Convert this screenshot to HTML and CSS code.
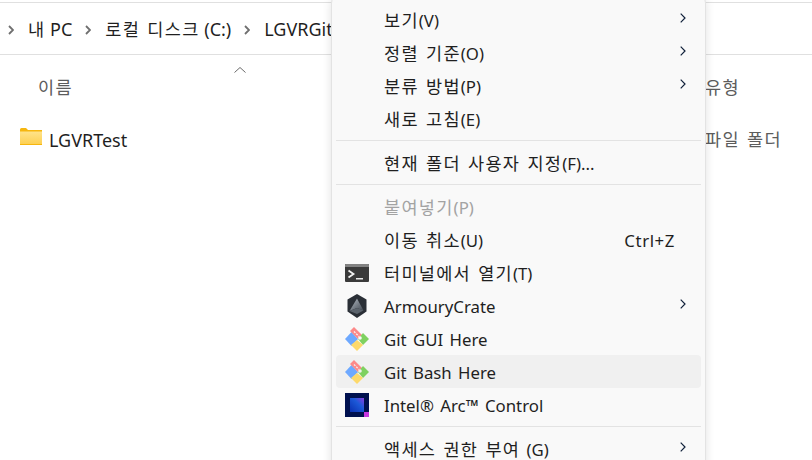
FILE: index.html
```html
<!DOCTYPE html>
<html lang="ko">
<head>
<meta charset="utf-8">
<title>Explorer context menu</title>
<link rel="stylesheet" href="styles.css">
</head>
<body>
<main class="explorer">
  <nav class="crumbs">
    <svg class="crumb-chev" viewBox="0 0 6 10"><path d="M1 1l4 4-4 4"/></svg>
    <span class="crumb"><span class="ko">내</span> PC</span>
    <svg class="crumb-chev" viewBox="0 0 6 10"><path d="M1 1l4 4-4 4"/></svg>
    <span class="crumb"><span class="ko">로컬 디스크</span> (C:)</span>
    <svg class="crumb-chev" viewBox="0 0 6 10"><path d="M1 1l4 4-4 4"/></svg>
    <span class="crumb">LGVRGit</span>
  </nav>
  <div class="list">
    <div class="list-head">
      <span class="col-name"><span class="ko">이름</span><svg class="caret" viewBox="0 0 12 6"><path d="M.5 5.500L6 .5l5.500 5"/></svg></span>
      <span class="col-type"><span class="ko">유형</span></span>
    </div>
    <div class="list-row">
      <span class="col-file">
        <svg class="folder" viewBox="0 0 22 17">
          <defs><linearGradient id="fg" x1="0" y1="0" x2="0" y2="1"><stop offset="0" stop-color="#ffe38a"/><stop offset="1" stop-color="#fdd053"/></linearGradient></defs>
          <path d="M0 1.500Q0 0 1.500 0H6l2 2h14v15H0z" fill="#f6b60f"/>
          <path d="M0 3.500h22V16H0z" fill="url(#fg)"/>
        </svg>LGVRTest</span>
      <span class="col-type"><span class="ko">파일 폴더</span></span>
    </div>
  </div>
</main>

<aside class="menu">
  <div class="item"><span class="slot"></span><span class="label"><span class="ko">보기</span>(V)</span><svg class="chev" viewBox="0 0 6 10"><path d="M.7.7L5 5 .7 9.300"/></svg></div>
  <div class="item"><span class="slot"></span><span class="label"><span class="ko">정렬 기준</span>(O)</span><svg class="chev" viewBox="0 0 6 10"><path d="M.7.7L5 5 .7 9.300"/></svg></div>
  <div class="item"><span class="slot"></span><span class="label"><span class="ko">분류 방법</span>(P)</span><svg class="chev" viewBox="0 0 6 10"><path d="M.7.7L5 5 .7 9.300"/></svg></div>
  <div class="item"><span class="slot"></span><span class="label"><span class="ko">새로 고침</span>(E)</span></div>
  <hr class="sep">
  <div class="item"><span class="slot"></span><span class="label"><span class="ko">현재 폴더 사용자 지정</span>(F)...</span></div>
  <hr class="sep">
  <div class="item item-off"><span class="slot"></span><span class="label"><span class="ko">붙여넣기</span>(P)</span></div>
  <div class="item"><span class="slot"></span><span class="label"><span class="ko">이동 취소</span>(U)</span><span class="key">Ctrl+Z</span></div>
  <div class="item"><span class="slot">
    <svg class="ico" viewBox="0 0 24 24">
      <rect y="3" width="24" height="18" rx="1" fill="#3a3a3a"/>
      <path d="M0 4a1 1 0 0 1 1-1h22a1 1 0 0 1 1 1v2H0z" fill="#828282"/>
      <path d="M3.500 9.500l5 3.500-5 3.500" fill="none" stroke="#f2f2f2" stroke-width="1.800"/>
      <path d="M11 17h7v1.500h-7z" fill="#e8e8e8"/>
    </svg></span><span class="label"><span class="ko">터미널에서 열기</span>(T)</span></div>
  <div class="item"><span class="slot">
    <svg class="ico" viewBox="0 0 24 24">
      <defs><linearGradient id="ag" x1="0" y1="0" x2="1" y2="1"><stop offset="0" stop-color="#b4bcc4"/><stop offset="1" stop-color="#3f4650"/></linearGradient></defs>
      <path d="M12 0l9.500 5.500v12L12 24 2.500 17.500v-12z" fill="#2a2f36"/>
      <path d="M12 4.500l6.500 12L12 14l-7.500 3z" fill="url(#ag)"/>
      <path d="M4.500 17l7.500-3 6.500 2.500L12 20z" fill="#5b636c"/>
    </svg></span><span class="label label-latin">ArmouryCrate</span><svg class="chev" viewBox="0 0 6 10"><path d="M.7.7L5 5 .7 9.300"/></svg></div>
  <div class="item"><span class="slot">
    <svg class="ico" viewBox="0 0 24 24">
      <path d="M0 12l6.500-7 6.500 7-6.500 7z" fill="#6ea9ff"/>
      <path d="M5 4l4-4 8 8-4 4z" fill="#fd8a8a"/>
      <path d="M13 12l5-6 6 6-6 6z" fill="#7fd160"/>
      <path d="M6 18l6-5 6 5-6 6z" fill="#fdd96b"/>
      <path d="M9 4.500l5 5" fill="none" stroke="#f9f9f9" stroke-width="1.200" stroke-dasharray="2 1.200"/>
      <circle cx="15" cy="11" r="1.800" fill="#f9f9f9"/>
    </svg></span><span class="label label-latin">Git GUI Here</span></div>
  <div class="item item-hover"><span class="slot">
    <svg class="ico" viewBox="0 0 24 24">
      <path d="M0 12l6.500-7 6.500 7-6.500 7z" fill="#6ea9ff"/>
      <path d="M5 4l4-4 8 8-4 4z" fill="#fd8a8a"/>
      <path d="M13 12l5-6 6 6-6 6z" fill="#7fd160"/>
      <path d="M6 18l6-5 6 5-6 6z" fill="#fdd96b"/>
      <path d="M9 4.500l5 5" fill="none" stroke="#f0f0f0" stroke-width="1.200" stroke-dasharray="2 1.200"/>
      <circle cx="15" cy="11" r="1.800" fill="#f0f0f0"/>
    </svg></span><span class="label label-latin">Git Bash Here</span></div>
  <div class="item"><span class="slot">
    <svg class="ico" viewBox="0 0 24 24">
      <defs><linearGradient id="ig" x1="0" y1="1" x2="1" y2="0"><stop offset="0" stop-color="#0a2fb0"/><stop offset=".6" stop-color="#1c59d8"/><stop offset="1" stop-color="#8a3fe0"/></linearGradient></defs>
      <rect width="24" height="24" fill="#00114f"/>
      <rect x="5" y="5" width="14" height="14" fill="url(#ig)"/>
      <rect x="19" y="19" width="5" height="5" fill="#c637e0"/>
    </svg></span><span class="label label-latin">Intel® Arc™ Control</span></div>
  <hr class="sep">
  <div class="item"><span class="slot"></span><span class="label"><span class="ko">액세스 권한 부여</span> (G)</span><svg class="chev" viewBox="0 0 6 10"><path d="M.7.7L5 5 .7 9.300"/></svg></div>
</aside>
</body>
</html>
```
FILE: styles.css
```css
html, body {
  margin: 0;
  height: 100%;
  overflow: hidden;
  background: #fff;
}
body {
  position: relative;
  font-family: "Noto Sans", "Noto Sans CJK KR", sans-serif;
  font-size: 18px;
  color: #1f1f1f;
}
.ko {
  font-family: "Noto Sans CJK KR", sans-serif;
  font-size: 17.500px;
  letter-spacing: 1.300px;
  word-spacing: 1px;
  font-weight: 400;
}
.explorer {
  display: flex;
  flex-direction: column;
  height: 100%;
  box-sizing: border-box;
  padding-top: 2px;
}
.crumbs {
  display: flex;
  align-items: center;
  height: 51px;
  padding-left: 8px;
  border-top: 1px solid #e0e0e0;
  border-bottom: 1px solid #e0e0e0;
}
.crumb { margin: 0 13px 0 14px; white-space: nowrap; }
.crumb-chev { width: 6px; height: 10px; flex: none; margin-top: 2px; }
.crumb-chev path { fill: none; stroke: #6f6f6f; stroke-width: 1.800; }
.list { display: flex; flex-direction: column; }
.list-head, .list-row { display: grid; grid-template-columns: 705px 1fr; white-space: nowrap; }
.list-head { height: 53px; align-items: center; color: #5c5c5c; }
.col-name { padding-left: 38px; position: relative; top: 5px; }
.list-head .col-type { position: relative; top: 5px; }
.caret {
  position: absolute;
  left: 234px;
  top: -7px;
  width: 12px;
  height: 6px;
}
.caret path { fill: none; stroke: #6a6a6a; }
.list-row { height: 44px; align-items: center; padding-top: 10px; }
.col-file { display: flex; align-items: center; padding-left: 20px; gap: 7px; }
.folder { width: 22px; height: 17px; flex: none; margin-top: -8px; }
.list-row .col-type { color: #5c5c5c; margin-top: -4px; }

.menu {
  position: absolute;
  left: 331px;
  top: -5px;
  width: 365px;
  padding: 7px 4px 0;
  height: 480px;
  background: #f9f9f9;
  border-radius: 8px;
  border: 1px solid #e3e3e3;
  box-shadow: 0 2px 10px rgba(0, 0, 0, .12);
  box-sizing: content-box;
  font-size: 16.800px;
  word-spacing: 2px;
}
.item {
  display: flex;
  align-items: center;
  height: 33px;
  border-radius: 4px;
  white-space: nowrap;
}
.item-hover { background: #f0f0f0; }
.item-off { color: #a3a3a3; }
.slot { display: flex; align-items: center; width: 48px; padding-left: 9px; box-sizing: border-box; flex: none; }
.ico { width: 24px; height: 24px; display: block; }
.label { flex: 1; }
.label-latin { padding-top: 2px; }
.key { margin-right: 26px; letter-spacing: .6px; padding-top: 2px; }
.chev { width: 6px; height: 10px; margin-right: 15px; margin-top: -3px; flex: none; }
.chev path { fill: none; stroke: #10203a; stroke-width: 1.200; }
.sep {
  border: 0;
  height: 1px;
  margin: 5px 0;
  background: #e3e3e3;
}
```
